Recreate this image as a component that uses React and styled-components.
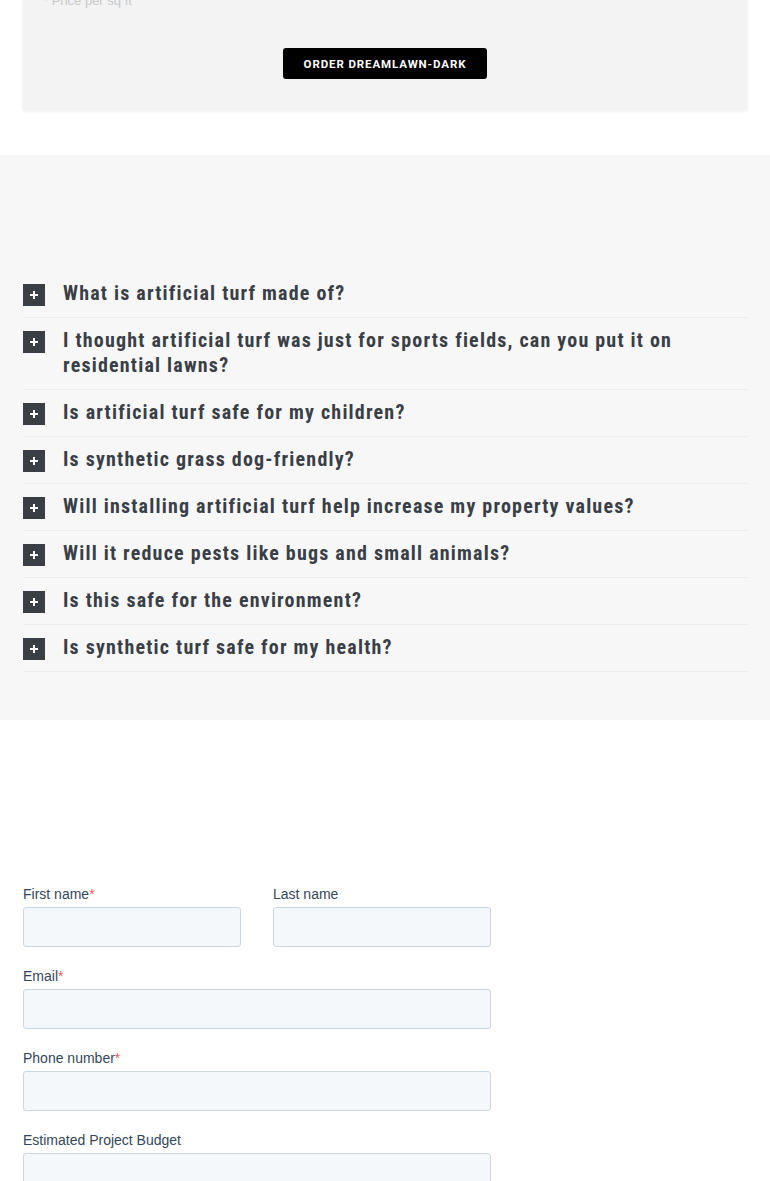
import React from "react";
import styled, { createGlobalStyle } from "styled-components";

const Global = createGlobalStyle`
  body {
    margin: 0;
    background: #fff;
    font-family: "Liberation Sans", Arial, sans-serif;
  }
  * { box-sizing: border-box; }
`;

const Page = styled.div`
  width: 770px;
  overflow: hidden;
`;

const Card = styled.div`
  margin: 0 23px;
  background: #f3f3f3;
  box-shadow: 0 1px 4px rgba(0, 0, 0, 0.08);
  padding: 0 20px 31px;
  display: flex;
  flex-direction: column;
  align-items: center;
`;

const CutText = styled.div`
  align-self: flex-start;
  margin-top: -7px;
  height: 55px;
  font-size: 13px;
  line-height: 15px;
  color: #c9c9c9;
`;

const OrderButton = styled.button`
  background: #000;
  color: #fff;
  border: 0;
  border-radius: 3px;
  width: 204px;
  height: 31px;
  font-family: Roboto, "Liberation Sans", sans-serif;
  font-weight: 700;
  font-size: 11.5px;
  letter-spacing: 0.9px;
  text-transform: uppercase;
`;

const FaqSection = styled.section`
  margin-top: 45px;
  background: #f7f7f7;
  padding: 116px 23px 48px;
`;

const Item = styled.div`
  display: flex;
  align-items: flex-start;
  gap: 18px;
  padding: 10px 0 11px;
  border-bottom: 1px solid #ebebeb;
`;

const PlusBox = styled.span`
  flex: none;
  width: 22px;
  height: 22px;
  margin-top: 3px;
  background: #3a3e45;
  display: flex;
  align-items: center;
  justify-content: center;
`;

const Question = styled.h3`
  margin: 0;
  font-family: "Roboto Condensed", "Liberation Sans Narrow", Roboto, sans-serif;
  font-weight: 700;
  font-size: 20px;
  line-height: 25px;
  letter-spacing: 1.2px;
  color: #3a3f47;
`;

const Form = styled.form`
  margin: 164px 23px 0;
  width: 468px;
  display: flex;
  flex-direction: column;
  gap: 19px;
`;

const Row = styled.div`
  display: grid;
  grid-template-columns: 1fr 1fr;
  gap: 32px;
`;

const Field = styled.div`
  display: flex;
  flex-direction: column;
  gap: 3px;
`;

const Label = styled.label`
  font-size: 14px;
  line-height: 20px;
  color: #33475b;
`;

const Req = styled.span`
  color: #f2545b;
`;

const Input = styled.input`
  height: 40px;
  width: 100%;
  background: #f5f8fa;
  border: 1px solid #cbd6e2;
  border-radius: 3px;
`;

const questions = [
  "What is artificial turf made of?",
  "I thought artificial turf was just for sports fields, can you put it on residential lawns?",
  "Is artificial turf safe for my children?",
  "Is synthetic grass dog-friendly?",
  "Will installing artificial turf help increase my property values?",
  "Will it reduce pests like bugs and small animals?",
  "Is this safe for the environment?",
  "Is synthetic turf safe for my health?",
];

const Plus = () => (
  <svg width="10" height="10" viewBox="0 0 10 10">
    <path d="M5 1v8M1 5h8" stroke="#fff" strokeWidth="2" />
  </svg>
);

const FormField = ({ label, required }) => (
  <Field>
    <Label>
      {label}
      {required && <Req>*</Req>}
    </Label>
    <Input />
  </Field>
);

export default function App() {
  return (
    <Page>
      <Global />
      <Card>
        <CutText>* Price per sq ft</CutText>
        <OrderButton>Order Dreamlawn-Dark</OrderButton>
      </Card>
      <FaqSection>
        {questions.map((q) => (
          <Item key={q}>
            <PlusBox>
              <Plus />
            </PlusBox>
            <Question>{q}</Question>
          </Item>
        ))}
      </FaqSection>
      <Form>
        <Row>
          <FormField label="First name" required />
          <FormField label="Last name" />
        </Row>
        <FormField label="Email" required />
        <FormField label="Phone number" required />
        <FormField label="Estimated Project Budget" />
      </Form>
    </Page>
  );
}
